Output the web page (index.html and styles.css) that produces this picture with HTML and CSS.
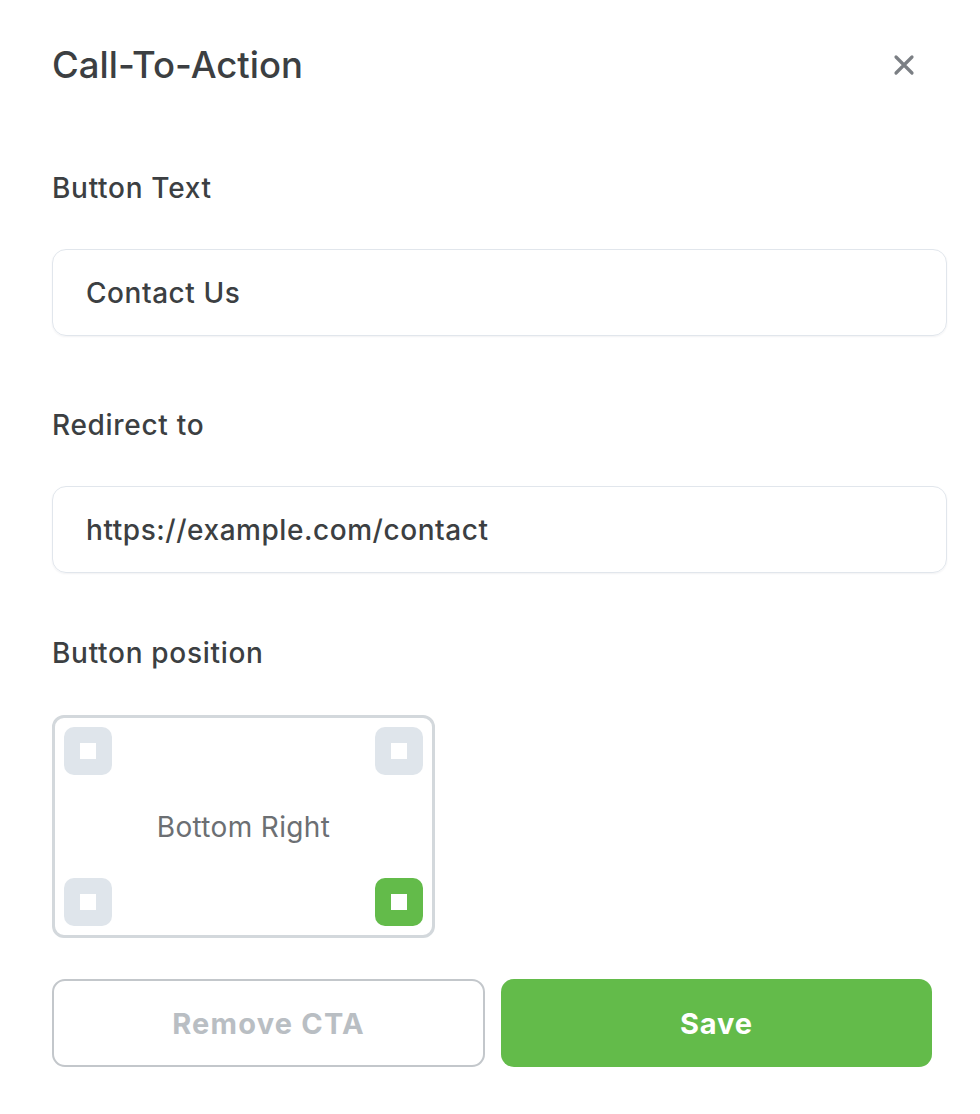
FILE: index.html
```html
<!DOCTYPE html>
<html lang="en">
<head>
<meta charset="utf-8">
<title>Call-To-Action</title>
<link rel="stylesheet" href="styles.css">
</head>
<body>
<div class="panel">
  <header class="head">
    <h1 class="title">Call-To-Action</h1>
    <button class="close" aria-label="Close">
      <svg width="22" height="22" viewBox="0 0 22 22"><path d="M3 3 L19 19 M19 3 L3 19" stroke="#7b7f84" stroke-width="3.2" stroke-linecap="round" fill="none"/></svg>
    </button>
  </header>

  <label class="label label-first">Button Text</label>
  <div class="input">Contact Us</div>

  <label class="label label-second">Redirect to</label>
  <div class="input">https://example.com/contact</div>

  <label class="label label-third">Button position</label>
  <div class="pos">
    <span class="corner tl"><i></i></span>
    <span class="corner tr"><i></i></span>
    <span class="pos-text">Bottom Right</span>
    <span class="corner bl"><i></i></span>
    <span class="corner br active"><i></i></span>
  </div>

  <div class="actions">
    <button class="btn btn-outline">Remove CTA</button>
    <button class="btn btn-save">Save</button>
  </div>
</div>
</body>
</html>
```

FILE: styles.css
```css
* { box-sizing: border-box; }
html, body { margin: 0; background: #ffffff; }
body {
  font-family: Inter, "Noto Sans", "Liberation Sans", sans-serif;
  color: #3c3f42;
}
.panel {
  padding: 43px 33px 0 52px;
  width: 980px;
}
.head {
  display: flex;
  align-items: center;
  justify-content: space-between;
  height: 44px;
}
.title {
  margin: 0;
  font-size: 36.5px;
  line-height: 44px;
  font-weight: 500;
  color: #3c3f42;
}
.close {
  border: 0;
  background: none;
  padding: 0;
  width: 22px;
  height: 22px;
  margin-right: 32px;
  display: flex;
}
.label {
  display: block;
  font-size: 28px;
  line-height: 32px;
  font-weight: 500;
  letter-spacing: 0.7px;
  color: #3c3f42;
}
.label-first { margin-top: 85px; }
.label-second { margin-top: 73px; }
.label-third { margin-top: 64px; }
.input {
  margin-top: 45px;
  height: 87px;
  border: 1px solid #e1e6ec;
  border-radius: 14px;
  box-shadow: 0 1px 2px rgba(30, 40, 60, 0.06);
  padding: 0 33px;
  display: flex;
  align-items: center;
  font-size: 28px;
  font-weight: 500;
  letter-spacing: 0.55px;
  color: #3c3f42;
}
.pos {
  margin-top: 46px;
  width: 383px;
  height: 223px;
  border: 3px solid #d3d8dc;
  border-radius: 12px;
  padding: 9px;
  display: grid;
  grid-template-columns: 48px 1fr 48px;
  grid-template-rows: 48px 1fr 48px;
}
.corner {
  width: 48px;
  height: 48px;
  border-radius: 10px;
  background: #dfe5eb;
  display: flex;
  align-items: center;
  justify-content: center;
}
.corner i {
  width: 16px;
  height: 16px;
  background: #ffffff;
}
.corner.active { background: #63bb4a; }
.tl { grid-column: 1; grid-row: 1; }
.tr { grid-column: 3; grid-row: 1; }
.bl { grid-column: 1; grid-row: 3; }
.br { grid-column: 3; grid-row: 3; }
.pos-text {
  grid-column: 1 / 4;
  grid-row: 2;
  display: flex;
  align-items: center;
  justify-content: center;
  font-size: 28px;
  letter-spacing: 0.35px;
  color: #6c6f73;
  font-weight: 400;
}
.actions {
  margin-top: 41px;
  width: 880px;
  display: grid;
  grid-template-columns: 433px 431px;
  gap: 16px;
}
.btn {
  height: 88px;
  border-radius: 13px;
  font-family: Inter, "Noto Sans", "Liberation Sans", sans-serif;
  font-size: 29px;
  font-weight: 700;
  letter-spacing: 0.9px;
  cursor: pointer;
}
.btn-outline {
  background: #ffffff;
  border: 2px solid #c3c7cb;
  color: #b9bec3;
  letter-spacing: 1.2px;
}
.btn-save {
  background: #63bb4a;
  border: 0;
  color: #ffffff;
}
```
